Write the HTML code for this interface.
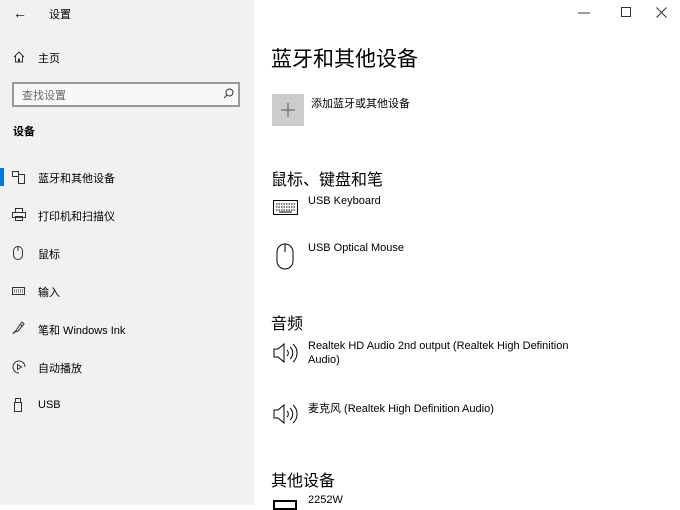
<!DOCTYPE html>
<html><head><meta charset="utf-8"><style>
*{margin:0;padding:0;box-sizing:border-box}
body{width:680px;height:505px;overflow:hidden;font-family:"Liberation Sans","Noto Sans CJK SC",sans-serif;background:#fff;position:relative;color:#000}
.side{position:absolute;left:0;top:0;width:254px;height:505px;background:#f1f1f1}
.a{position:absolute;white-space:nowrap}
.s12{font-size:12px}
.s11{font-size:11px}
svg{position:absolute;fill:none;stroke:#333;stroke-width:1}
</style></head><body>
<div class="side">
<div class="a" style="left:13px;top:5px;font-size:14px">&#8592;</div>
<div class="a s11" style="left:49px;top:6px">设置</div>
<svg style="left:13px;top:51px" width="12" height="12" viewBox="0 0 12 12"><path d="M1 6L6 1L11 6M2.5 5v6h3V8h1v3h3V5"/></svg>
<div class="a s11" style="left:38px;top:50px">主页</div>
<div class="a" style="left:12px;top:82px;width:228px;height:25px;border:2px solid #999;background:#f8f8f8"></div>
<div class="a s11" style="left:22px;top:87px;color:#666">查找设置</div>
<svg style="left:223px;top:88px" width="11" height="11" viewBox="0 0 11 11"><circle cx="6.5" cy="4.5" r="3.5"/><path d="M4 7L1 10"/></svg>
<div class="a" style="left:13px;top:123px;font-size:11px;font-weight:bold">设备</div>
<div class="a" style="left:0;top:168px;width:4px;height:18px;background:#0078d7"></div>
<svg style="left:12px;top:171px" width="14" height="13" viewBox="0 0 14 13"><rect x="0.5" y="0.5" width="6" height="5"/><rect x="6.5" y="3.5" width="6" height="9"/></svg>
<div class="a s11" style="left:38px;top:170px">蓝牙和其他设备</div>
<svg style="left:12px;top:208px" width="14" height="13" viewBox="0 0 14 13"><rect x="3.5" y="0.5" width="7" height="4"/><rect x="0.5" y="4.5" width="13" height="5"/><rect x="3.5" y="8.5" width="7" height="4"/></svg>
<div class="a s11" style="left:38px;top:208px">打印机和扫描仪</div>
<svg style="left:13px;top:246px" width="10" height="14" viewBox="0 0 10 14"><rect x="0.5" y="0.5" width="9" height="13" rx="4.5"/><path d="M5 1v4"/></svg>
<div class="a s11" style="left:38px;top:246px">鼠标</div>
<svg style="left:12px;top:287px" width="13" height="8" viewBox="0 0 13 8"><rect x="0.5" y="0.5" width="12" height="7"/><path d="M2 3h9M2 5h9" stroke-dasharray="1 1"/></svg>
<div class="a s11" style="left:38px;top:284px">输入</div>
<svg style="left:12px;top:321px" width="14" height="14" viewBox="0 0 14 14"><path d="M1 13c1-3 3-2 4-5l5-7 2 2-6 7c-2 1-3 0-5 3M8 3l2 2"/></svg>
<div class="a s11" style="left:38px;top:322px">笔和 Windows Ink</div>
<svg style="left:12px;top:360px" width="14" height="14" viewBox="0 0 14 14"><path d="M7 13A6 6 0 1 1 13 7"/><path d="M5.5 4.5v5l4-2.5z"/></svg>
<div class="a s11" style="left:38px;top:360px">自动播放</div>
<svg style="left:14px;top:398px" width="8" height="14" viewBox="0 0 8 14"><rect x="0.5" y="4.5" width="7" height="9"/><rect x="1.5" y="0.5" width="5" height="4"/></svg>
<div class="a s11" style="left:38px;top:399px">USB</div>
</div>
<svg style="left:578px;top:12px" width="12" height="2" viewBox="0 0 12 2"><path d="M0 1h12"/></svg>
<div class="a" style="left:621px;top:7px;width:10px;height:10px;border:1px solid #333"></div>
<svg style="left:656px;top:7px" width="11" height="11" viewBox="0 0 11 11"><path d="M0.5 0.5l10 10M10.5 0.5l-10 10"/></svg>
<div class="a" style="left:271px;top:43px;font-size:21px">蓝牙和其他设备</div>
<div class="a" style="left:272px;top:94px;width:32px;height:32px;background:#ccc"></div>
<svg style="left:281px;top:103px;stroke:#555" width="14" height="14" viewBox="0 0 14 14"><path d="M7 0v14M0 7h14"/></svg>
<div class="a s11" style="left:311px;top:95px">添加蓝牙或其他设备</div>
<div class="a" style="left:271px;top:166px;font-size:16px">鼠标、键盘和笔</div>
<svg style="left:273px;top:200px;stroke:#000" width="25" height="15" viewBox="0 0 25 15"><rect x="0.5" y="0.5" width="24" height="14"/><path d="M3 4h19M3 7h19M3 10h19" stroke-dasharray="1.5 1"/><path d="M6 12h13"/></svg>
<div class="a s11" style="left:308px;top:195px">USB Keyboard</div>
<svg style="left:276px;top:243px;stroke:#000" width="18" height="27" viewBox="0 0 18 27"><rect x="1" y="1" width="16" height="25" rx="8"/><path d="M9 1v8"/></svg>
<div class="a s11" style="left:308px;top:242px">USB Optical Mouse</div>
<div class="a" style="left:271px;top:310px;font-size:16px">音频</div>
<svg style="left:273px;top:342px;stroke:#000" width="27" height="22" viewBox="0 0 27 22"><path d="M1 7h4l6-5v18l-6-5H1z"/><path d="M14 8a4 4 0 0 1 0 6M17 5a8 8 0 0 1 0 12M20 2a12 12 0 0 1 0 18"/></svg>
<div class="a s11" style="left:308px;top:339px;line-height:14px">Realtek HD Audio 2nd output (Realtek High Definition<br>Audio)</div>
<svg style="left:273px;top:403px;stroke:#000" width="27" height="22" viewBox="0 0 27 22"><path d="M1 7h4l6-5v18l-6-5H1z"/><path d="M14 8a4 4 0 0 1 0 6M17 5a8 8 0 0 1 0 12M20 2a12 12 0 0 1 0 18"/></svg>
<div class="a s11" style="left:308px;top:400px">麦克风 (Realtek High Definition Audio)</div>
<div class="a" style="left:271px;top:467px;font-size:16px">其他设备</div>
<div class="a" style="left:273px;top:500px;width:24px;height:10px;border:2px solid #000"></div>
<div class="a s11" style="left:308px;top:494px">2252W</div>
</body></html>
